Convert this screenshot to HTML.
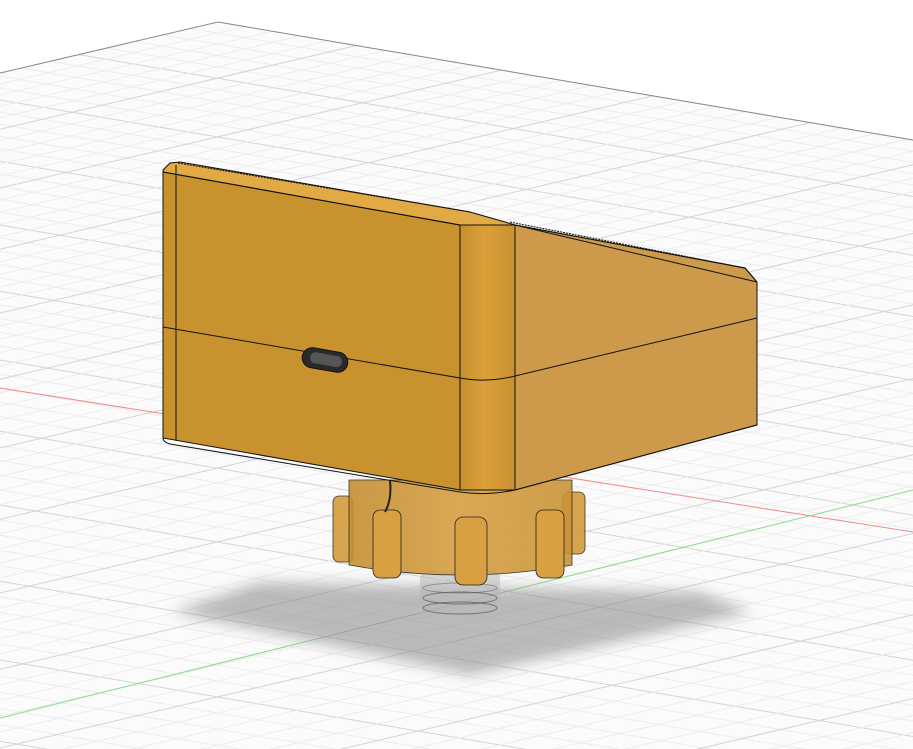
<!DOCTYPE html>
<html><head><meta charset="utf-8"><style>
html,body{margin:0;padding:0;background:#fff;width:913px;height:749px;overflow:hidden}
svg{display:block}
</style></head><body>
<svg id="s" width="913" height="749" viewBox="0 0 913 749" xmlns="http://www.w3.org/2000/svg">
<defs>
<clipPath id="gc"><polygon points="0,73 218,22 913,140 913,749 0,749"/></clipPath>
<filter id="bl" x="-20%" y="-50%" width="140%" height="200%"><feGaussianBlur stdDeviation="7"/></filter>
<linearGradient id="edge" x1="0" x2="1"><stop offset="0" stop-color="#c68f2c"/><stop offset="0.45" stop-color="#dca03a"/><stop offset="1" stop-color="#c8912e"/></linearGradient>
<linearGradient id="cyl" x1="0" x2="1"><stop offset="0" stop-color="#c58f33"/><stop offset="0.5" stop-color="#d8a044"/><stop offset="1" stop-color="#c99437"/></linearGradient>
</defs>
<rect width="913" height="749" fill="#fff"/>
<g id="grid" clip-path="url(#gc)"><rect width="913" height="749" fill="#fbfbfb"/></g>
<polyline points="0,73 218,22 913,140" fill="none" stroke="#8a8a8a" stroke-width="1"/>
<line x1="0" y1="388" x2="913" y2="532" stroke="#f08a8a" stroke-width="1"/>
<line x1="0" y1="718" x2="913" y2="490" stroke="#86da86" stroke-width="1"/>
<!-- shadow -->
<polygon points="172,612 260,582 700,592 752,612 470,675" fill="#8f8f8f" opacity="0.6" filter="url(#bl)"/>
<!-- thread -->
<g>
<rect x="420" y="570" width="80" height="48" rx="8" fill="#b8b8b8" opacity="0.55"/>
<ellipse cx="460" cy="598" rx="37" ry="6" fill="none" stroke="#444" stroke-width="1" opacity="0.6"/>
<ellipse cx="460" cy="608" rx="37" ry="6" fill="none" stroke="#444" stroke-width="1" opacity="0.6"/>
<ellipse cx="460" cy="588" rx="37" ry="5" fill="none" stroke="#555" stroke-width="1" opacity="0.5"/>
</g>
<!-- knob -->
<g stroke="#222" stroke-width="0.8">
<rect x="333" y="496" width="20" height="66" rx="6" fill="#d49c3c" opacity="0.9"/>
<rect x="563" y="492" width="22" height="62" rx="6" fill="#d49c3c" opacity="0.9"/>
<path d="M349,480 L349,565 Q460,585 572,565 L572,480 Z" fill="url(#cyl)" opacity="0.9"/>
<rect x="373" y="510" width="28" height="68" rx="7" fill="#d8a040"/>
<rect x="455" y="517" width="32" height="68" rx="8" fill="#d8a040"/>
<rect x="536" y="510" width="28" height="68" rx="7" fill="#d8a040"/>
</g>
<path d="M390,480 Q392,500 385,512" stroke="#222" stroke-width="2" fill="none"/>
<!-- box -->
<g stroke="#111" stroke-width="1">
<polygon points="163,172 460,225 460,490 163,438" fill="#c8922f"/>
<polygon points="515,225 745,268 757,282 757,425 515,490" fill="#cd9a4b"/>
<rect x="460" y="225" width="55" height="265" fill="url(#edge)"/>
<path d="M163,438 Q163,442 170,444 L460,492 Q487,496 515,490 L757,425" fill="none"/>
<polygon points="163,172 163,170 170,163 180,162 470,212 505,222 515,225 745,268 757,282 745,268 515,225 460,225" fill="#e2aa45"/>
<line x1="163" y1="172" x2="460" y2="225"/>
<line x1="163" y1="327" x2="460" y2="378"/>
<path d="M460,378 Q487,383 515,376 L757,318" fill="none"/>
<line x1="515" y1="225" x2="757" y2="282"/>
<line x1="178" y1="163" x2="470" y2="212" stroke-dasharray="2,1"/>
<line x1="510" y1="222" x2="745" y2="268" stroke-dasharray="2,1"/>
<line x1="460" y1="225" x2="460" y2="490"/>
<line x1="515" y1="225" x2="515" y2="490"/>
<line x1="176" y1="165" x2="176" y2="440"/>
<line x1="163" y1="172" x2="163" y2="438"/>
<line x1="757" y1="282" x2="757" y2="425"/>
</g>
<rect x="302" y="350" width="46" height="20" rx="10" transform="rotate(10 325 360)" fill="#2a2a2a" stroke="#111"/>
<rect x="310" y="354" width="32" height="11" rx="5" transform="rotate(10 325 360)" fill="#555"/>
<script>
(function(){
var g=document.getElementById('grid'),ns='http://www.w3.org/2000/svg';
function L(x1,y1,x2,y2,c,w){var l=document.createElementNS(ns,'line');l.setAttribute('x1',x1);l.setAttribute('y1',y1);l.setAttribute('x2',x2);l.setAttribute('y2',y2);l.setAttribute('stroke',c);l.setAttribute('stroke-width',w);g.appendChild(l);}
var i,c;
for(i=0;i<90;i++){c=-15+i*11+0.05*i*i;L(0,c,913,c+0.17*913,(i%5==0)?'#d4d4d4':'#ececec',1);}
for(i=0;i<120;i++){c=73+i*11+0.05*i*i;L(0,c,913,c-0.235*913,(i%5==0)?'#d4d4d4':'#ececec',1);}
})();
</script>
</svg>
</body></html>
